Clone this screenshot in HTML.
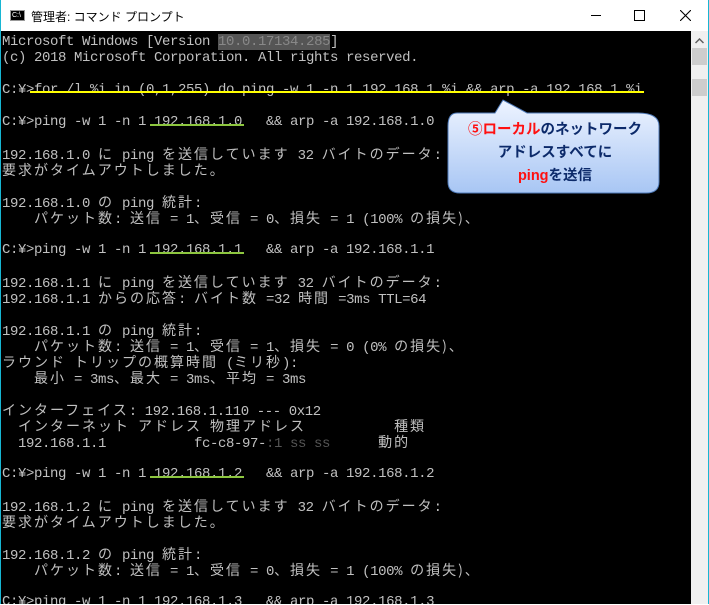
<!DOCTYPE html>
<html><head><meta charset="utf-8"><style>
body{margin:0;width:709px;height:605px;overflow:hidden;background:#fff;position:relative;font-family:"Liberation Mono","Noto Sans CJK JP",monospace}
.frame{position:absolute;left:0;top:0;width:707px;height:603px;border:1px solid #17b6d3;border-top:none}
.title{position:absolute;left:1px;top:0;width:707px;height:31px;background:#fff}
.ttl{position:absolute;left:30px;top:8px;font:12px "Liberation Sans","Noto Sans CJK JP",sans-serif;color:#000}
.con{position:absolute;left:1px;top:31px;width:690px;height:573px;background:#000;overflow:hidden}
.sb{position:absolute;left:691px;top:31px;width:17px;height:573px;background:#f0f0f0}
.t{position:absolute;left:1px;top:3px;width:800px;font-family:"Liberation Mono",monospace;font-size:14px;letter-spacing:-0.4px;color:#c0c0c0}
.t div{height:16px;line-height:16px;overflow:visible;white-space:pre}
.w{font-family:"Noto Sans CJK JP",sans-serif;letter-spacing:2px}
.ul{position:absolute;height:2px}
</style></head><body>
<div class="frame"></div>
<div class="title">
<div style="position:absolute;left:9px;top:10px;width:15px;height:11px;background:#000;border:1px solid #999;box-sizing:border-box;color:#fff;font:7px 'Liberation Sans',sans-serif;line-height:9px;padding-left:1px">C:\</div>
<div class="ttl">管理者: コマンド プロンプト</div>
<div style="position:absolute;left:590px;top:15px;width:10px;height:1px;background:#000"></div>
<div style="position:absolute;left:633px;top:10px;width:9px;height:9px;border:1px solid #000"></div>
<svg style="position:absolute;left:679px;top:10px" width="11" height="11"><path d="M0 0L11 11M11 0L0 11" stroke="#000" stroke-width="1.1"/></svg>
</div>
<div class="con"><div class="t">
<div>Microsoft Windows [Version <span style="background:#555;color:#888">10.0.17134.285</span>]</div>
<div>(c) 2018 Microsoft Corporation. All rights reserved.</div>
<div></div>
<div>C:¥&gt;for /l %i in (0,1,255) do ping -w 1 -n 1 192.168.1.%i &amp;&amp; arp -a 192.168.1.%i</div>
<div></div>
<div>C:¥&gt;ping -w 1 -n 1 192.168.1.0   &amp;&amp; arp -a 192.168.1.0</div>
<div></div>
<div>192.168.1.0 <span class="w">に</span> ping <span class="w">を送信しています</span> 32 <span class="w">バイトのデータ</span>:</div>
<div><span class="w">要求がタイムアウトしました。</span></div>
<div></div>
<div>192.168.1.0 <span class="w">の</span> ping <span class="w">統計</span>:</div>
<div>    <span class="w">パケット数</span>: <span class="w">送信</span> = 1<span class="w">、受信</span> = 0<span class="w">、損失</span> = 1 (100% <span class="w">の損失</span><span class="w">)、</span></div>
<div></div>
<div>C:¥&gt;ping -w 1 -n 1 192.168.1.1   &amp;&amp; arp -a 192.168.1.1</div>
<div></div>
<div>192.168.1.1 <span class="w">に</span> ping <span class="w">を送信しています</span> 32 <span class="w">バイトのデータ</span>:</div>
<div>192.168.1.1 <span class="w">からの応答</span>: <span class="w">バイト数</span> =32 <span class="w">時間</span> =3ms TTL=64</div>
<div></div>
<div>192.168.1.1 <span class="w">の</span> ping <span class="w">統計</span>:</div>
<div>    <span class="w">パケット数</span>: <span class="w">送信</span> = 1<span class="w">、受信</span> = 1<span class="w">、損失</span> = 0 (0% <span class="w">の損失</span><span class="w">)、</span></div>
<div><span class="w">ラウンド</span> <span class="w">トリップの概算時間</span> (<span class="w">ミリ秒</span>):</div>
<div>    <span class="w">最小</span> = 3ms<span class="w">、最大</span> = 3ms<span class="w">、平均</span> = 3ms</div>
<div></div>
<div><span class="w">インターフェイス</span>: 192.168.1.110 --- 0x12</div>
<div>  <span class="w">インターネット</span> <span class="w">アドレス</span> <span class="w">物理アドレス</span>           <span class="w">種類</span></div>
<div>  192.168.1.1           fc-c8-97-<span style="color:#555">:1 ss ss</span>      <span class="w">動的</span></div>
<div></div>
<div>C:¥&gt;ping -w 1 -n 1 192.168.1.2   &amp;&amp; arp -a 192.168.1.2</div>
<div></div>
<div>192.168.1.2 <span class="w">に</span> ping <span class="w">を送信しています</span> 32 <span class="w">バイトのデータ</span>:</div>
<div><span class="w">要求がタイムアウトしました。</span></div>
<div></div>
<div>192.168.1.2 <span class="w">の</span> ping <span class="w">統計</span>:</div>
<div>    <span class="w">パケット数</span>: <span class="w">送信</span> = 1<span class="w">、受信</span> = 0<span class="w">、損失</span> = 1 (100% <span class="w">の損失</span><span class="w">)、</span></div>
<div></div>
<div>C:¥&gt;ping -w 1 -n 1 192.168.1.3   &amp;&amp; arp -a 192.168.1.3</div>
</div></div>
<div class="ul" style="left:30px;top:91px;width:614px;background:#ffff00"></div>
<div class="ul" style="left:150px;top:124px;width:94px;background:#8dc63f"></div>
<div class="ul" style="left:150px;top:252px;width:94px;background:#8dc63f"></div>
<div class="ul" style="left:150px;top:476px;width:94px;background:#8dc63f"></div>
<svg style="position:absolute;left:440px;top:96px" width="230" height="104">
<defs><linearGradient id="g" x1="0" y1="0" x2="0" y2="1"><stop offset="0" stop-color="#eef4ff"/><stop offset="1" stop-color="#a8c6f4"/></linearGradient></defs>
<path d="M17 17H55L63 4L87 17H198Q219 17 219 30V86Q219 97 206 97H20Q8 97 8 86V30Q8 17 17 17Z" fill="url(#g)" stroke="#4f7ab8" stroke-width="1"/>
</svg>
<div style="position:absolute;left:447px;top:119px;width:216px;text-align:center;font:bold 14.5px 'Liberation Sans','Noto Sans CJK JP',sans-serif;line-height:23px;color:#0c2a6a">
<span style="color:#ff1010">⑤ローカル</span>のネットワーク<br>アドレスすべてに<br><span style="color:#ff1010">ping</span>を送信</div>
<div class="sb">
<svg style="position:absolute;left:4px;top:7px" width="9" height="6"><path d="M0.5 5L4.5 1L8.5 5" stroke="#606060" stroke-width="1.5" fill="none"/></svg>
<div style="position:absolute;left:1px;top:17px;width:15px;height:17px;background:#cdcdcd"></div>
<div style="position:absolute;left:1px;top:48px;width:15px;height:17px;background:#cdcdcd"></div>
</div>
</body></html>
